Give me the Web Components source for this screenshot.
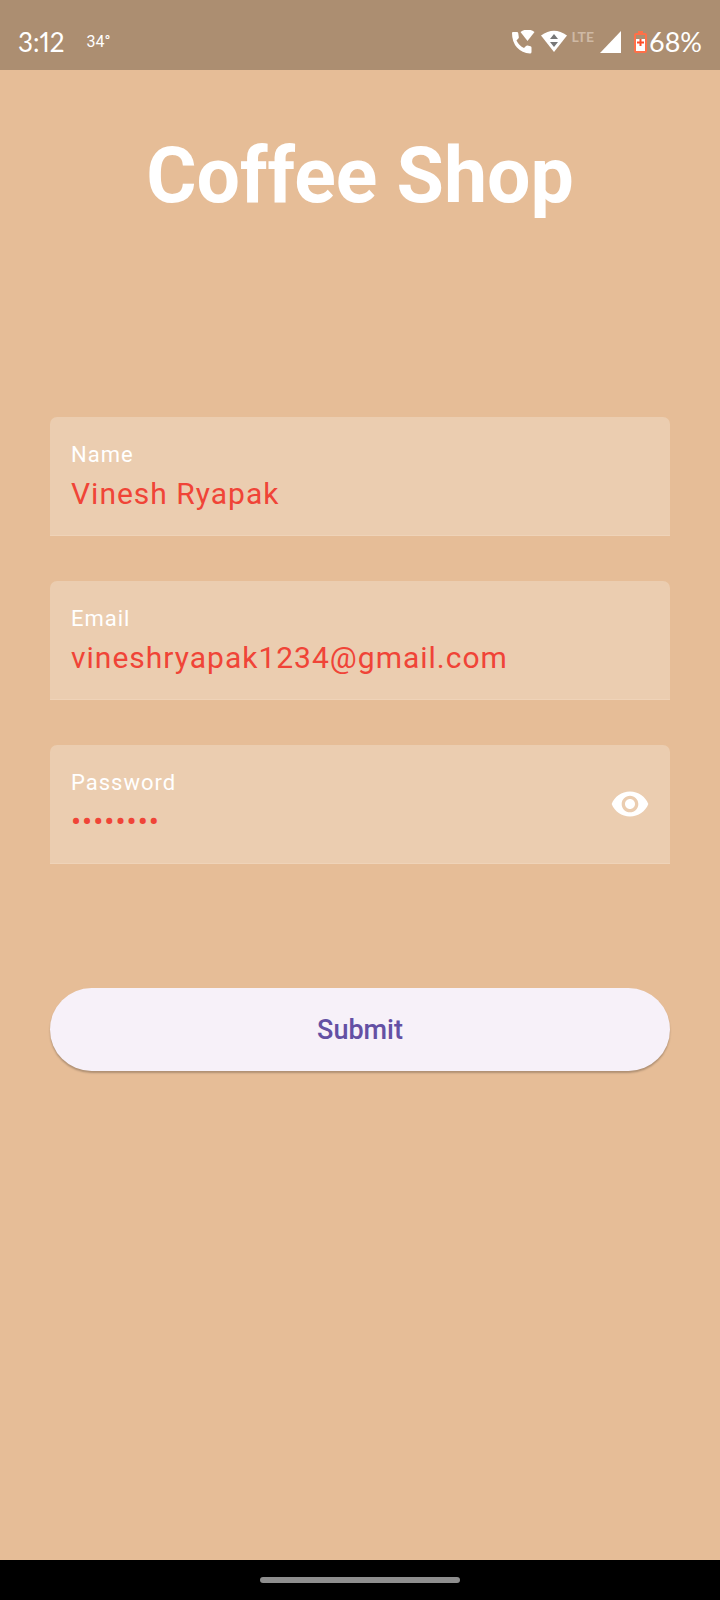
<!DOCTYPE html>
<html lang="en">
<head>
<meta charset="utf-8">
<meta name="viewport" content="width=device-width, initial-scale=1">
<title>Coffee Shop</title>
<style>
  body { margin: 0; background: #e6bd97; font-family: Roboto, sans-serif; }
</style>
</head>
<body>
<coffee-app>
  <status-bar slot="top" time="3:12" temperature="34°" network="LTE" battery="68%"></status-bar>
  <sign-up-form heading="Coffee Shop">
    <text-field label="Name" type="text" value="Vinesh Ryapak"></text-field>
    <text-field label="Email" type="email" value="vineshryapak1234@gmail.com"></text-field>
    <text-field label="Password" type="password" value="coffee12"></text-field>
    <pill-button slot="action">Submit</pill-button>
  </sign-up-form>
  <gesture-bar slot="bottom"></gesture-bar>
</coffee-app>
<script>
class BaseElement extends HTMLElement {
  render(html) {
    const template = document.createElement('template');
    template.innerHTML = html;
    this.attachShadow({ mode: 'open' }).append(template.content.cloneNode(true));
  }
}

customElements.define('coffee-app', class extends BaseElement {
  connectedCallback() {
    this.render(`
      <style>
        :host { display: flex; flex-direction: column; min-height: 100vh; }
        main { flex: 1; }
      </style>
      <slot name="top"></slot>
      <main><slot></slot></main>
      <slot name="bottom"></slot>`);
  }
});

customElements.define('status-bar', class extends BaseElement {
  connectedCallback() {
    this.render(`
      <style>
        :host { display: block; background: #ac8e71; color: #fff; font-family: Lato, sans-serif; }
        header { display: flex; justify-content: space-between; box-sizing: border-box; height: 70px; padding: 15px 18px 0 18px; }
        .group { display: flex; align-items: center; height: 54px; }
        .time { font-size: 26px; line-height: 32px; font-variant-numeric: proportional-nums; }
        .temp { font: 16px/32px Roboto, sans-serif; margin-left: 22px; }
        .net { font: bold 14px/16px Lato, sans-serif; color: #cfb9a4; margin: 0 6px 10px 5px; }
        .battery { font-size: 27px; line-height: 32px; margin-left: 2px; }
        svg { display: block; fill: #fff; }
        .wifi { margin-left: 6px; }
        .cell { margin-right: 13px; }
      </style>
      <header>
        <div class="group"><span class="time"></span><span class="temp"></span></div>
        <div class="group">
          <svg width="24" height="24" viewBox="0 0 24 24" aria-hidden="true">
            <path d="M1 3Q1 2 2 2H6Q7 2 7.200 3L7.800 7Q8 8 7.300 8.600L5.500 10.400Q8 15.500 13 18L15 16Q15.600 15.300 16.600 15.500L19.500 16.200Q20.500 16.500 20.500 17.500V22Q20.500 23.500 19 23.500Q11 23 6 17.500Q1 12 1 3Z"/>
            <path d="M9.500 2Q16.500-3 23.500 2L16.500 11Z"/>
          </svg>
          <svg class="wifi" width="26" height="24" viewBox="0 0 26 24" aria-hidden="true">
            <path d="M0 5.500Q13-4 26 5.500L13 22Z"/>
            <path fill="#777" d="M13 4L17 9H9ZM9 12H17L13 17Z"/>
          </svg>
          <span class="net"></span>
          <svg class="cell" width="21" height="22" viewBox="0 0 21 22" aria-hidden="true"><path d="M21 0V22H0Z"/></svg>
          <svg width="13" height="22" viewBox="0 0 13 22" aria-hidden="true">
            <path fill="#ff7048" d="M4 0H9V2H11Q13 2 13 4V20Q13 22 11 22H2Q0 22 0 20V4Q0 2 2 2H4Z"/>
            <path fill="#ac8e71" d="M2 4H11V9H2Z"/>
            <path d="M2 8H11V20H2Z"/>
            <path fill="#ff4d2a" d="M5.500 8H7.500V10.500H10V12.500H7.500V15H5.500V12.500H3V10.500H5.500Z"/>
          </svg>
          <span class="battery"></span>
        </div>
      </header>`);
    const fill = { '.time': 'time', '.temp': 'temperature', '.net': 'network', '.battery': 'battery' };
    for (const [selector, name] of Object.entries(fill)) {
      this.shadowRoot.querySelector(selector).textContent = this.getAttribute(name);
    }
  }
});

customElements.define('sign-up-form', class extends BaseElement {
  connectedCallback() {
    this.render(`
      <style>
        :host { display: block; padding: 60px 50px; }
        h1 { margin: 0 0 195px; color: #fff; font-size: 77px; line-height: 92px; font-weight: 700; text-align: center; }
        .fields { display: grid; gap: 45px; }
        .action { margin-top: 124px; }
      </style>
      <form>
        <h1></h1>
        <div class="fields"><slot></slot></div>
        <div class="action"><slot name="action"></slot></div>
      </form>`);
    this.shadowRoot.querySelector('h1').textContent = this.getAttribute('heading');
  }
});

customElements.define('text-field', class extends BaseElement {
  connectedCallback() {
    this.render(`
      <style>
        :host { display: block; }
        .box { display: flex; align-items: center; box-sizing: border-box; height: 119px; padding: 0 20px 0 21px; background: #ebcdb0; border-bottom: 1px solid #efd3b8; border-radius: 7px 7px 0 0; }
        .text { flex: 1; min-width: 0; padding-top: 3px; }
        label { display: block; color: #fff; font-size: 22px; line-height: 28px; letter-spacing: 1px; }
        input { display: block; width: 100%; height: 40px; margin: 5px 0 0; padding: 0; border: 0; outline: 0; background: none; color: #f04437; font: 30px/40px Roboto, sans-serif; letter-spacing: 1px; }
        button { display: block; padding: 0; border: 0; background: none; }
        button[hidden] { display: none; }
        svg { display: block; }
      </style>
      <div class="box">
        <div class="text"><label for="field"></label><input id="field"></div>
        <button type="button" aria-label="Show password" hidden>
          <svg width="40" height="40" viewBox="0 0 24 24" fill="#fff"><path d="M12 4.500C7 4.500 2.730 7.610 1 12c1.730 4.390 6 7.500 11 7.500s9.270-3.110 11-7.500c-1.730-4.390-6-7.500-11-7.500zM12 17c-2.760 0-5-2.240-5-5s2.240-5 5-5 5 2.240 5 5-2.240 5-5 5zm0-8c-1.660 0-3 1.340-3 3s1.340 3 3 3 3-1.340 3-3-1.340-3-3-3z"/></svg>
        </button>
      </div>`);
    const input = this.shadowRoot.querySelector('input');
    const toggle = this.shadowRoot.querySelector('button');
    this.shadowRoot.querySelector('label').textContent = this.getAttribute('label');
    input.type = this.getAttribute('type');
    input.value = this.getAttribute('value');
    toggle.hidden = input.type !== 'password';
    toggle.addEventListener('click', () => {
      input.type = input.type === 'password' ? 'text' : 'password';
    });
  }
});

customElements.define('pill-button', class extends BaseElement {
  connectedCallback() {
    this.render(`
      <style>
        :host { display: block; }
        button { display: block; width: 100%; height: 83px; padding: 0; border: 0; border-radius: 42px; background: #f7f1f9; color: #6450a4; font: 500 27px/32px Roboto, sans-serif; box-shadow: 0 2px 2px rgba(0, 0, 0, .24); }
      </style>
      <button type="button"><slot></slot></button>`);
  }
});

customElements.define('gesture-bar', class extends BaseElement {
  connectedCallback() {
    this.render(`
      <style>
        :host { display: flex; align-items: center; justify-content: center; height: 40px; background: #000; }
        span { width: 200px; height: 6px; border-radius: 3px; background: #8e8e8e; }
      </style>
      <span></span>`);
  }
});
</script>
</body>
</html>
